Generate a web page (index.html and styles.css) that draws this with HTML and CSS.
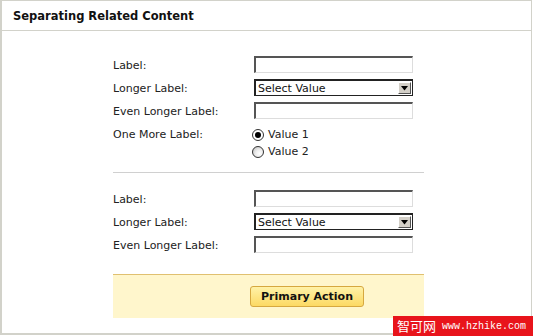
FILE: index.html
```html
<!DOCTYPE html>
<html>
<head>
<meta charset="utf-8">
<link rel="stylesheet" href="styles.css">
</head>
<body>
<div class="panel">
  <div class="header"><h1 class="title">Separating Related Content</h1></div>
  <div class="content">
    <div class="group">
      <div class="row"><span class="label">Label:</span><span class="text-input"></span></div>
      <div class="row"><span class="label">Longer Label:</span><span class="select"><span class="select-text">Select Value</span><span class="select-btn"><svg width="9" height="5" viewBox="0 0 9 5"><polygon points="1,0 8,0 4.5,4.5" fill="#000"/></svg></span></span></div>
      <div class="row"><span class="label">Even Longer Label:</span><span class="text-input"></span></div>
      <div class="row row-top"><span class="label">One More Label:</span>
        <div class="radios">
          <div class="radio-row"><span class="radio checked"></span><span>Value 1</span></div>
          <div class="radio-row"><span class="radio"></span><span>Value 2</span></div>
        </div>
      </div>
    </div>
    <div class="divider"></div>
    <div class="group group2">
      <div class="row"><span class="label">Label:</span><span class="text-input"></span></div>
      <div class="row"><span class="label">Longer Label:</span><span class="select"><span class="select-text">Select Value</span><span class="select-btn"><svg width="9" height="5" viewBox="0 0 9 5"><polygon points="1,0 8,0 4.5,4.5" fill="#000"/></svg></span></span></div>
      <div class="row"><span class="label">Even Longer Label:</span><span class="text-input"></span></div>
    </div>
    <div class="actions"><button class="primary">Primary Action</button></div>
  </div>
</div>
<div class="watermark"><span class="wm-cn">智可网</span><span class="wm-url">www.hzhike.com</span></div>
</body>
</html>
```
FILE: styles.css
```css
html, body {
  margin: 0;
  padding: 0;
  background: #fff;
}
body {
  font-family: "DejaVu Sans", Verdana, sans-serif;
  font-size: 11px;
  color: #222;
  width: 533px;
  height: 336px;
  overflow: hidden;
}
.panel {
  width: 532px;
  height: 335px;
  box-sizing: border-box;
  border: 1px solid #d2d2ca;
  border-left-width: 2px;
  border-bottom-width: 2px;
}
.header {
  height: 29px;
  border-bottom: 1px solid #d2d2ca;
  display: flex;
  align-items: center;
  padding-left: 11px;
}
.title {
  margin: 0;
  font-size: 11.5px;
  font-weight: bold;
  color: #111;
}
.content {
  margin-left: 111px;
  width: 311px;
  padding-top: 25px;
}
.group {
  display: flex;
  flex-direction: column;
  gap: 6px;
}
.row {
  display: flex;
  align-items: center;
  height: 17px;
}
.row-top {
  align-items: flex-start;
  height: auto;
  margin-top: 3px;
}
.label {
  width: 141px;
  flex: none;
  padding-top: 2px;
}
.row-top .label {
  padding-top: 0;
}
.text-input {
  width: 159px;
  height: 17px;
  box-sizing: border-box;
  border-top: 2px solid #555;
  border-left: 2px solid #555;
  border-right: 1px solid #ddd;
  border-bottom: 1px solid #ddd;
  background: #fff;
}
.select {
  width: 159px;
  height: 17px;
  box-sizing: border-box;
  border: 1px solid #222;
  border-top-width: 2px;
  border-left-width: 2px;
  display: flex;
  align-items: center;
  background: #fff;
}
.select-text {
  flex: 1;
  padding-left: 2px;
  font-size: 11px;
  color: #111;
}
.select-btn {
  width: 13px;
  height: 12px;
  margin-right: 1px;
  box-sizing: border-box;
  background: #d4d0c8;
  border: 1px solid #fff;
  border-right-color: #555;
  border-bottom-color: #555;
  display: flex;
  align-items: center;
  justify-content: center;
}
.radios {
  display: flex;
  flex-direction: column;
  gap: 4px;
  margin-left: -2px;
}
.radio-row {
  display: flex;
  align-items: center;
  gap: 4px;
}
.radio {
  width: 12px;
  height: 12px;
  box-sizing: border-box;
  border-radius: 50%;
  border: 1px solid #333;
  background: radial-gradient(circle at 65% 65%, #fff 0, #eee 40%, #bbb 100%);
  position: relative;
}
.radio.checked {
  background: #fff;
}
.radio.checked::after {
  content: "";
  position: absolute;
  left: 2px;
  top: 2px;
  width: 6px;
  height: 6px;
  border-radius: 50%;
  background: #000;
}
.divider {
  margin-top: 14px;
  border-top: 1px solid #d0d0d0;
}
.group2 {
  margin-top: 17px;
}
.actions {
  margin-top: 21px;
  background: #fff6cc;
  border-top: 1px solid #e0c070;
  height: 43px;
  display: flex;
  align-items: center;
  padding-left: 137px;
}
.primary {
  font-family: "DejaVu Sans", Verdana, sans-serif;
  font-size: 11px;
  font-weight: bold;
  color: #111;
  height: 21px;
  width: 114px;
  padding: 0;
  border: 1px solid #d6a840;
  border-radius: 3px;
  background: linear-gradient(#fff2a8, #fcd964);
}
.watermark {
  position: absolute;
  left: 393px;
  top: 316px;
  width: 140px;
  height: 20px;
  background: #e8141b;
  color: #fff;
  display: flex;
  align-items: center;
  gap: 6px;
  padding-left: 4px;
  box-sizing: border-box;
  white-space: nowrap;
}
.wm-cn {
  font-family: "Noto Sans CJK SC", sans-serif;
  font-size: 13px;
  line-height: 20px;
}
.wm-url {
  font-family: "Liberation Mono", monospace;
  font-size: 10px;
}
```
